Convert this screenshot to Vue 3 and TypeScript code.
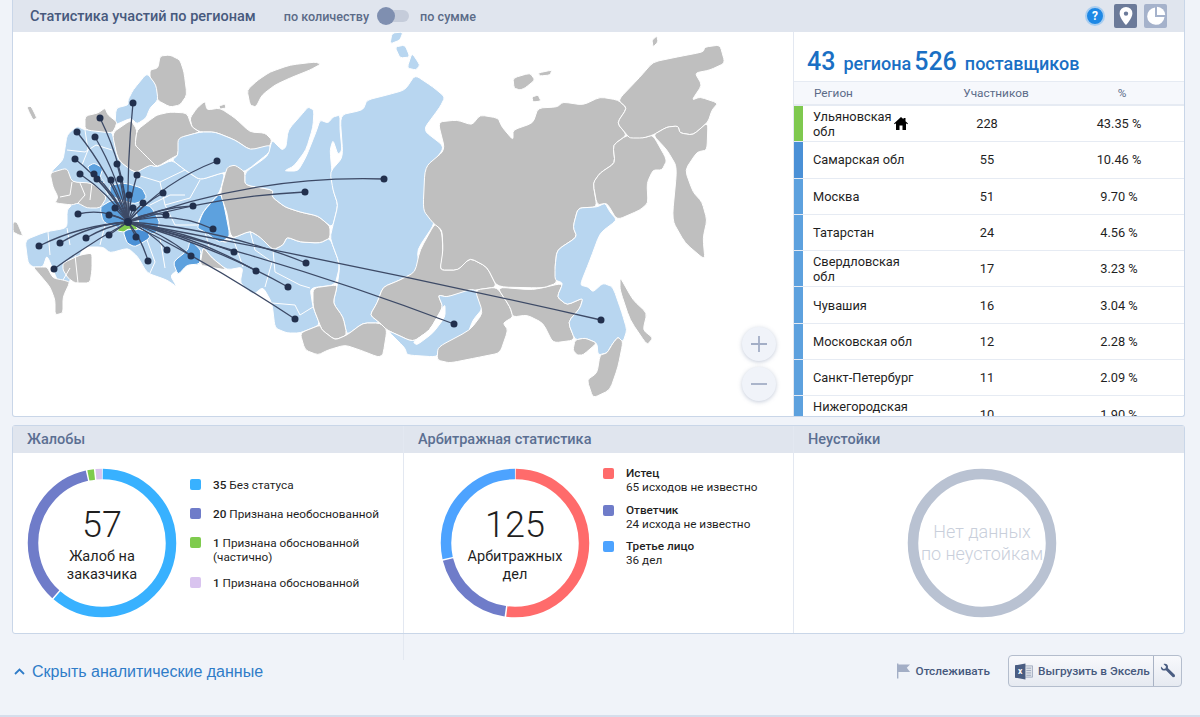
<script setup lang="ts">
interface Region { fill: string; points: string }
interface Row { name: string; count: number; pct: string; color: string; home?: boolean }
interface Slice { value: number; color: string }

const GRAY = '#bfbfbf'
const LIGHT = '#b8d6f0'
const MID = '#5da1de'
const DARK = '#4a90d6'
const GREEN = '#7fcb4e'

const regions: Region[] = [
  // запад
  { fill: GRAY, points: '13,222 17,222 23,236 19,235 13,232' },
  { fill: GRAY, points: '27,107 31,106 37,118 33,120 29,112' },
  { fill: LIGHT, points: '67,135 77,126 85,130 112,130 118,160 135,173 150,165 157,167 172,160 185,170 200,180 225,172 220,192 203,212 197,225 205,232 225,243 233,238 250,231 260,237 273,250 283,245 287,237 300,242 320,243 330,238 340,265 335,285 310,288 313,307 320,325 300,333 287,333 275,328 272,303 263,287 253,295 240,283 243,267 227,270 212,258 203,247 200,265 187,265 170,275 177,287 167,280 147,273 138,257 128,248 110,253 103,247 83,247 70,282 63,283 58,282 47,255 43,267 33,267 28,263 25,240 45,232 67,228 67,210 72,205 50,173 63,160 65,148' },
  { fill: GRAY, points: '150,70 158,68 160,56 170,55 180,60 184,72 187,95 180,105 170,107 157,100 155,85 150,78' },
  { fill: LIGHT, points: '128,100 133,90 147,73 156,85 158,100 150,108 146,118 137,124 131,118 115,125 116,108 128,105' },
  { fill: GRAY, points: '85,116 98,113 105,108 108,115 117,122 115,128 112,133 85,130' },
  { fill: GRAY, points: '112,133 131,120 137,130 135,145 140,150 150,160 157,167 150,165 135,173 118,160' },
  { fill: GRAY, points: '137,130 150,120 157,115 170,112 187,113 192,127 200,132 180,138 178,155 172,158 157,167 150,160 140,150 135,145' },
  { fill: GRAY, points: '190,118 197,108 205,101 207,110 220,108 235,118 250,132 265,133 272,140 268,150 250,150 235,140 215,132 200,132 192,127' },
  { fill: LIGHT, points: '178,138 200,132 215,132 235,140 250,150 270,145 270,152 245,172 225,172 200,180 185,170 172,160 178,155' },
  { fill: GRAY, points: '247,90 258,80 270,72 290,65 315,62 321,64 310,70 290,78 275,85 262,95 256,107 250,105' },
  { fill: GRAY, points: '219,106 225,104 226,108 220,109' },
  { fill: LIGHT, points: '392,33 403,32 400,40 390,44' },
  { fill: LIGHT, points: '395,47 405,45 410,57 400,58' },
  { fill: LIGHT, points: '412,53 420,65 416,70 407,68' },
  { fill: GRAY, points: '50,173 67,168 72,182 92,183 107,197 100,208 87,208 78,203 72,205 55,203 58,197 53,187' },
  { fill: GRAY, points: '33,267 43,267 47,267 53,278 63,280 70,282 63,297 63,313 55,315 55,300 50,287 40,275' },
  { fill: GRAY, points: '63,263 80,255 92,253 92,270 90,283 75,283 68,278 63,270' },
  { fill: GRAY, points: '203,247 212,258 227,270 215,268 200,265' },
  // центр, тёмные регионы
  { fill: MID, points: '87,167 94,163 103,168 100,177 105,183 96,182' },
  { fill: MID, points: '110,185 125,183 142,188 147,198 135,204 120,200 110,195' },
  { fill: MID, points: '100,207 112,200 125,203 130,222 118,228 103,222' },
  { fill: MID, points: '135,207 150,205 160,222 155,235 140,228' },
  { fill: DARK, points: '123,231 135,228 148,232 150,238 135,247 127,243' },
  { fill: MID, points: '173,262 188,250 190,240 201,250 200,264 187,265 178,275' },
  { fill: MID, points: '218,195 222,196 226,215 230,236 220,243 205,232 197,228 203,212' },
  { fill: GREEN, points: '117,231 122,222 135,224 138,230 128,229 124,232' },
  // Западная Сибирь
  { fill: GRAY, points: '220,193 227,167 235,165 245,172 245,185 273,190 272,197 285,207 300,212 318,216 330,226 330,238 320,243 300,242 287,237 283,245 273,250 260,237 250,231 233,238 230,233 227,213' },
  { fill: LIGHT, points: '245,172 268,156 272,140 282,150 286,147 288,130 303,113 308,107 314,110 313,127 306,150 294,166 284,171 298,171 306,157 316,132 320,120 328,123 333,117 340,115 340,130 342,150 338,155 333,140 330,150 332,172 333,190 338,205 333,225 330,226 318,216 300,212 285,207 272,197 273,190 245,185' },
  { fill: LIGHT, points: '340,115 363,110 367,100 387,95 405,90 415,75 433,87 445,97 440,107 423,130 445,147 427,170 425,200 427,210 435,223 417,250 420,270 400,280 383,287 377,303 370,315 380,323 363,323 347,335 343,317 333,303 337,287 340,265 330,238 333,225 338,205 333,190 330,172 343,157' },
  { fill: GRAY, points: '313,288 335,285 337,287 333,303 343,317 347,335 335,340 322,330 320,325 313,307' },
  { fill: GRAY, points: '300,333 320,325 322,330 335,340 347,335 363,323 380,323 387,330 383,355 378,357 360,350 345,345 328,350 318,355 305,350' },
  // Восточная Сибирь
  { fill: GRAY, points: '370,315 377,303 383,287 400,280 415,272 420,250 435,223 442,232 443,255 440,270 458,270 470,258 487,267 497,287 475,290 447,297 438,295 443,307 430,330 413,342 387,330 380,323' },
  { fill: LIGHT, points: '387,330 405,348 407,355 437,357 440,347 468,333 473,320 483,308 475,288 447,297 438,295 443,307 430,330 413,342' },
  { fill: '#ffffff', points: '413,342 430,330 443,307 445,305 445,317 433,333 417,345' },
  { fill: GRAY, points: '437,360 438,347 470,330 483,313 475,290 497,287 510,307 513,317 503,323 508,330 500,353 480,357 450,363' },
  { fill: GRAY, points: '497,287 533,290 563,283 557,297 567,305 583,298 580,308 568,322 575,340 553,343 543,323 527,315 513,317 510,307' },
  { fill: GRAY, points: '438,122 457,120 472,125 480,115 498,118 502,127 513,140 513,130 533,123 538,108 557,107 563,102 583,105 600,97 618,100 627,108 617,123 627,135 613,145 615,163 600,173 593,183 597,207 578,208 573,227 577,237 557,250 555,267 557,283 543,288 497,287 487,267 470,258 458,270 440,270 443,250 442,230 433,223 423,210 425,167 445,150' },
  // Дальний Восток
  { fill: LIGHT, points: '555,267 557,250 577,237 573,227 578,208 597,207 605,203 610,212 617,220 600,233 590,260 580,285 588,287 593,292 603,283 613,287 622,313 627,330 623,342 618,337 613,343 607,353 598,355 597,343 585,338 575,340 568,322 580,308 583,298 567,305 557,297 563,283 555,280' },
  { fill: GRAY, points: '623,342 618,367 610,390 593,398 587,380 597,373 600,355 607,353 613,343 618,337' },
  { fill: GRAY, points: '573,350 575,340 585,338 597,343 583,355 577,355' },
  { fill: GRAY, points: '627,135 643,138 653,135 667,160 662,170 653,170 647,183 648,203 640,210 617,220 607,203 597,205 593,183 600,173 615,163 613,145' },
  { fill: GRAY, points: '618,100 640,77 653,62 677,57 703,52 705,47 720,45 725,63 710,70 695,73 702,85 692,100 700,97 718,103 712,110 708,122 693,135 680,133 678,126 667,127 653,135 643,138 630,138 627,135 617,123 627,108' },
  { fill: GRAY, points: '708,122 707,150 697,152 685,170 693,192 702,202 707,220 703,238 705,260 685,243 672,220 677,167 667,150 653,135 667,127 678,126 680,133 693,135' },
  { fill: GRAY, points: '620,277 633,300 647,313 643,330 653,338 647,345 630,320 620,290' },
  { fill: GRAY, points: '513,78 530,73 535,80 525,88 520,90 514,88' },
  { fill: GRAY, points: '538,73 552,70 550,75 540,76' },
  { fill: GRAY, points: '532,97 538,95 541,101 533,102' },
  { fill: GRAY, points: '652,40 657,36 658,42 653,47' },
]

// белые границы внутри больших областей
const borders: string[] = [
  '67,150 85,152 96,145 112,150',
  '85,130 88,150 82,165',
  '72,182 70,195 60,197',
  '80,183 85,195 78,203',
  '92,183 90,200',
  '100,178 108,195',
  '137,175 160,182 185,170',
  '160,182 165,205 190,198 200,180',
  '150,205 170,195 185,195',
  '165,205 175,225 197,225',
  '67,228 70,245',
  '48,232 50,255',
  '100,245 105,225',
  '147,240 155,262 150,273',
  '160,238 165,268',
  '205,232 210,250',
  '233,238 243,267',
  '250,231 255,250 272,262 265,287',
  '273,250 275,272 300,285 310,288',
  '272,303 295,305 300,315 313,307',
  '63,280 70,268',
  '75,255 78,283',
]

// скругляет углы многоугольника, чтобы контур не был рубленым
function rounded(points: string): string {
  const p = points.split(' ').map((s) => s.split(',').map(Number))
  const n = p.length
  const at = (a: number[], b: number[], t: number) => `${a[0] + (b[0] - a[0]) * t} ${a[1] + (b[1] - a[1]) * t}`
  let d = `M${at(p[0], p[1], 0.25)}`
  for (let i = 1; i <= n; i++) {
    const cur = p[i % n]
    d += `L${at(p[i - 1], cur, 0.75)}Q${cur[0]} ${cur[1]} ${at(cur, p[(i + 1) % n], 0.25)}`
  }
  return d + 'Z'
}

const HUB = { x: 128, y: 222 }
// x, y, изгиб
const dots: [number, number, number][] = [
  [133, 103, 0.03], [100, 118, -0.1], [77, 132, -0.08], [95, 137, -0.08], [75, 159, -0.1],
  [117, 164, -0.05], [80, 174, -0.1], [94, 174, -0.1], [137, 175, 0.05], [97, 179, -0.08],
  [111, 180, -0.05], [120, 179, 0], [217, 161, 0.12], [384, 179, 0.1], [305, 192, 0.06],
  [163, 193, 0.1], [129, 195, 0], [143, 203, 0.1], [193, 206, 0.1], [115, 208, 0],
  [133, 208, 0], [78, 214, -0.2], [109, 215, -0.1], [166, 215, 0.2], [213, 229, 0.18],
  [39, 246, -0.1], [60, 243, -0.12], [86, 238, -0.08], [109, 235, 0], [136, 237, 0],
  [148, 261, 0.1], [167, 250, 0.12], [191, 256, 0.1], [234, 252, 0.05], [256, 271, 0.08],
  [306, 263, 0.08], [288, 287, 0.06], [295, 319, 0.03], [454, 324, 0.03], [54, 269, -0.03],
  [601, 320, 0.01],
]

function curve(x: number, y: number, bend: number): string {
  const dx = x - HUB.x
  const dy = y - HUB.y
  const cx = (x + HUB.x) / 2 + bend * dy
  const cy = (y + HUB.y) / 2 - bend * dx
  return `M${HUB.x} ${HUB.y}Q${cx} ${cy} ${x} ${y}`
}

const rows: Row[] = [
  { name: 'Ульяновская обл', count: 228, pct: '43.35 %', color: '#7fc94f', home: true },
  { name: 'Самарская обл', count: 55, pct: '10.46 %', color: '#4a90d6' },
  { name: 'Москва', count: 51, pct: '9.70 %', color: '#5da1de' },
  { name: 'Татарстан', count: 24, pct: '4.56 %', color: '#5da1de' },
  { name: 'Свердловская обл', count: 17, pct: '3.23 %', color: '#5da1de' },
  { name: 'Чувашия', count: 16, pct: '3.04 %', color: '#5da1de' },
  { name: 'Московская обл', count: 12, pct: '2.28 %', color: '#5da1de' },
  { name: 'Санкт-Петербург', count: 11, pct: '2.09 %', color: '#5da1de' },
  { name: 'Нижегородская обл', count: 10, pct: '1.90 %', color: '#5da1de' },
]

const complaints: Slice[] = [
  { value: 35, color: '#38b1ff' },
  { value: 20, color: '#6f7cc9' },
  { value: 1, color: '#7fcb4e' },
  { value: 1, color: '#d9c4ef' },
]
const arbitration: Slice[] = [
  { value: 65, color: '#ff6b6b' },
  { value: 24, color: '#6f7cc9' },
  { value: 36, color: '#4da3ff' },
]

const R = 69
const C = 2 * Math.PI * R

function arcs(slices: Slice[]) {
  const total = slices.reduce((s, i) => s + i.value, 0)
  let offset = 0
  return slices.map((s) => {
    const len = (s.value / total) * C
    const arc = { color: s.color, dash: `${Math.max(len - 1.5, 0)} ${C}`, offset: -(offset + 0.75) }
    offset += len
    return arc
  })
}
</script>

<template>
  <div class="page">
    <section class="panel top">
      <header class="bar">
        <h2 class="bar__title">Статистика участий по регионам</h2>
        <span class="bar__opt">по количеству</span>
        <span class="toggle"><i class="toggle__knob"></i></span>
        <span class="bar__opt">по сумме</span>
        <span class="bar__tools">
          <span class="help">?</span>
          <span class="tool tool--on">
            <svg width="14" height="18" viewBox="0 0 14 18"><path fill="#fff" fill-rule="evenodd" d="M7 0a6.4 6.4 0 0 0-6.4 6.4C.6 11 7 18 7 18s6.4-7 6.4-11.600A6.400 6.400 0 0 0 7 0zm0 4.400a2.200 2.200 0 1 1 0 4.400 2.200 2.200 0 0 1 0-4.400z" /></svg>
          </span>
          <span class="tool">
            <svg width="20" height="20" viewBox="0 0 20 20"><path fill="#fff" d="M9 1.500a8.700 8.700 0 1 0 9.500 9.500H9z" /><path fill="#fff" d="M11 .8V9h8.200A8.500 8.500 0 0 0 11 .8z" /></svg>
          </span>
        </span>
      </header>
      <div class="top__body">
        <div class="map">
          <svg class="map__svg" width="780" height="384" viewBox="13 32 780 384">
            <path v-for="(r, i) in regions" :key="i" :d="rounded(r.points)" :fill="r.fill" stroke="#fff" stroke-width="1" stroke-linejoin="round" />
            <polyline v-for="(b, i) in borders" :key="'b' + i" :points="b" fill="none" stroke="#fff" stroke-width="1" />
            <path v-for="(d, i) in dots" :key="'l' + i" :d="curve(d[0], d[1], d[2])" fill="none" stroke="#3d4a66" stroke-width="1.300" />
            <circle v-for="(d, i) in dots" :key="'d' + i" :cx="d[0]" :cy="d[1]" r="3.500" fill="#22304d" />
            <circle :cx="HUB.x" :cy="HUB.y" r="4" fill="#22304d" />
          </svg>
          <button class="zoom zoom--plus"><svg width="18" height="18" viewBox="0 0 18 18"><path d="M9 1v16M1 9h16" stroke="#a3aec6" stroke-width="1.800" /></svg></button>
          <button class="zoom zoom--minus"><svg width="18" height="18" viewBox="0 0 18 18"><path d="M1 9h16" stroke="#a3aec6" stroke-width="1.800" /></svg></button>
        </div>
        <aside class="stats">
          <div class="stats__head">
            <b>43</b><span>региона</span><b class="second">526</b><span>поставщиков</span>
          </div>
          <div class="row row--head">
            <span class="cell-name">Регион</span>
            <span class="cell-count">Участников</span>
            <span class="cell-pct">%</span>
          </div>
          <div v-for="r in rows" :key="r.name" class="row">
            <i class="row__mark" :style="{ background: r.color }"></i>
            <span class="cell-name">
              <span :class="{ 'cell-name__short': r.home }">{{ r.name }}</span>
              <svg v-if="r.home" class="home" width="14" height="13" viewBox="0 0 14 13"><path d="M7 0 0 6.500l.8.800L2 6.300V13h3.500V8.500h3V13H12V6.300l1.200 1 .8-.8L11.500 4.200V1h-2v1.300z" /></svg>
            </span>
            <span class="cell-count">{{ r.count }}</span>
            <span class="cell-pct">{{ r.pct }}</span>
          </div>
        </aside>
      </div>
    </section>

    <section class="panel bottom">
      <div class="col">
        <h3 class="col__title">Жалобы</h3>
        <div class="col__body col__body--first">
          <div class="donut">
            <svg width="150" height="150" viewBox="0 0 150 150">
              <g transform="rotate(-90 75 75)">
                <circle v-for="(a, i) in arcs(complaints)" :key="i" cx="75" cy="75" :r="R" fill="none" :stroke="a.color" stroke-width="10.500" :stroke-dasharray="a.dash" :stroke-dashoffset="a.offset" />
              </g>
            </svg>
            <div class="donut__text"><b>57</b><span>Жалоб на<br />заказчика</span></div>
          </div>
          <ul class="legend legend--first">
            <li><i style="background:#38b1ff"></i><p><b>35</b> Без статуса</p></li>
            <li><i style="background:#6f7cc9"></i><p><b>20</b> Признана необоснованной</p></li>
            <li><i style="background:#7fcb4e"></i><p><b>1</b> Признана обоснованной<br />(частично)</p></li>
            <li class="legend__last"><i style="background:#d9c4ef"></i><p><b>1</b> Признана обоснованной</p></li>
          </ul>
        </div>
      </div>
      <div class="col">
        <h3 class="col__title">Арбитражная статистика</h3>
        <div class="col__body col__body--second">
          <div class="donut">
            <svg width="150" height="150" viewBox="0 0 150 150">
              <g transform="rotate(-90 75 75)">
                <circle v-for="(a, i) in arcs(arbitration)" :key="i" cx="75" cy="75" :r="R" fill="none" :stroke="a.color" stroke-width="10.500" :stroke-dasharray="a.dash" :stroke-dashoffset="a.offset" />
              </g>
            </svg>
            <div class="donut__text"><b>125</b><span>Арбитражных<br />дел</span></div>
          </div>
          <ul class="legend legend--second">
            <li><i style="background:#ff6b6b"></i><p><b>Истец</b><br />65 исходов не известно</p></li>
            <li><i style="background:#6f7cc9"></i><p><b>Ответчик</b><br />24 исхода не известно</p></li>
            <li><i style="background:#4da3ff"></i><p><b>Третье лицо</b><br />36 дел</p></li>
          </ul>
        </div>
      </div>
      <div class="col">
        <h3 class="col__title">Неустойки</h3>
        <div class="col__body col__body--third">
          <div class="donut">
            <svg width="150" height="150" viewBox="0 0 150 150"><circle cx="75" cy="75" :r="R" fill="none" stroke="#b9c2d2" stroke-width="10.500" /></svg>
            <div class="donut__text donut__text--empty">Нет данных<br />по неустойкам</div>
          </div>
        </div>
      </div>
    </section>

    <footer class="foot">
      <i class="foot__rule"></i>
      <a class="foot__hide">
        <svg width="11" height="7" viewBox="0 0 11 7"><path d="M1 6l4.500-4.500L10 6" fill="none" stroke="#2f7cc8" stroke-width="1.800" /></svg>
        Скрыть аналитические данные
      </a>
      <span class="foot__track">
        <svg width="14" height="16" viewBox="0 0 15 16"><path fill="#a3aec6" d="M0 0h1.500v16H0zM1.500 1H14l-3.500 3.500L14 9H1.500z" /></svg>
        Отслеживать
      </span>
      <div class="export">
        <span class="export__main">
          <svg width="18" height="17" viewBox="0 0 19 17">
            <path fill="#dfe3ea" stroke="#8a97b0" stroke-width=".7" d="M10 2.500h8.500v12H10z" />
            <path stroke="#8a97b0" stroke-width=".8" d="M12 5h5M12 7.500h5M12 10h5M12 12.500h5" />
            <path fill="#4a5d82" d="M0 2l11-2v17L0 15z" />
            <text x="5.500" y="11.500" text-anchor="middle" class="export__x">x</text>
          </svg>
          <span class="export__label">Выгрузить в Эксель</span>
        </span>
        <span class="export__tool">
          <svg width="16" height="16" viewBox="0 0 16 16"><path fill="#4a5d82" d="M1 3.500 3.500 6l2-.5.500-2L3.500 1C5.500 0 8 1.200 8 3.800c0 .5 0 .9-.2 1.300l7.200 7-.3 1.800-1.800.4-7-7.100c-.4.2-.8.200-1.300.200C2 8.200.4 5.800 1 3.500z" /></svg>
        </span>
      </div>
    </footer>
  </div>
</template>

<style>
html, body { margin: 0; background: #f0f3f9; }
</style>

<style scoped>
.page {
  position: relative;
  width: 1200px;
  height: 717px;
  box-sizing: border-box;
  padding: 0 15px 0 12px;
  font-family: Roboto, "Noto Sans", sans-serif;
  border-bottom: 2px solid #d5deec;
  overflow: hidden;
}
.panel {
  border: 1px solid #c9d6e8;
  background: #fff;
  box-sizing: border-box;
}
.top { height: 417px; border-top: 0; border-radius: 0 0 3px 3px; }
.bar {
  display: flex;
  align-items: center;
  height: 32px;
  padding: 0 17px;
  background: #e0e5ee;
  color: #5b6b88;
  font-size: 12.600px;
  font-weight: 500;
}
.bar__title { margin: 0 28px 0 0; font-size: 14.500px; font-weight: 500; color: #47597d; }
.toggle {
  position: relative;
  width: 24px;
  height: 12px;
  margin: 0 11px 0 16px;
  border-radius: 6px;
  background: #c5ccda;
}
.toggle__knob {
  position: absolute;
  left: -8px;
  top: -3px;
  width: 18px;
  height: 18px;
  border-radius: 50%;
  background: #7f8fb0;
}
.bar__tools { display: flex; align-items: center; margin-left: auto; gap: 7px; }
.help {
  width: 16px;
  height: 16px;
  margin-right: 2px;
  border: 2px solid #a8cdf0;
  border-radius: 50%;
  background: #1e88e5;
  color: #fff;
  font-size: 12px;
  font-weight: 700;
  line-height: 16px;
  text-align: center;
}
.tool {
  display: flex;
  align-items: center;
  justify-content: center;
  width: 23px;
  height: 24px;
  border-radius: 2px;
  background: #a5b2cb;
}
.tool--on { background: #6b7a99; }
.top__body { display: flex; height: 384px; }
.map { position: relative; flex: none; width: 780px; height: 384px; }
.map__svg { display: block; }
.zoom {
  position: absolute;
  left: 729px;
  width: 34px;
  height: 34px;
  padding: 0;
  display: flex;
  align-items: center;
  justify-content: center;
  border: 0;
  border-radius: 50%;
  background: #f0f3f9;
  box-shadow: 0 1px 4px rgba(90, 110, 150, 0.35);
}
.zoom--plus { top: 295px; }
.zoom--minus { top: 335px; }
.stats {
  flex: 1;
  min-width: 0;
  height: 384px;
  overflow: hidden;
  border-left: 1px solid #e3e8f1;
}
.stats__head {
  display: flex;
  align-items: baseline;
  gap: 8px;
  height: 49px;
  box-sizing: border-box;
  padding: 15px 0 0 13px;
  color: #1a6fc4;
  font-size: 18px;
  font-weight: 500;
}
.stats__head b { font-size: 25px; font-weight: 500; }
.stats__head .second { margin-left: -5px; }
.row {
  position: relative;
  display: grid;
  grid-template-columns: 107px 134px 1fr;
  align-items: center;
  height: 36.300px;
  box-sizing: border-box;
  padding-left: 19px;
  border-bottom: 1px solid #e6ebf3;
  color: #1f1f1f;
  font-size: 12.800px;
  line-height: 15px;
}
.row--head {
  height: 25px;
  background: #f6f8fc;
  border-top: 1px solid #e6ebf3;
  border-bottom: 2px solid #e6ebf3;
  color: #5b6b88;
  font-size: 11.800px;
}
.row--head .cell-name { padding-left: 1px; }
.row--head .cell-count { padding-left: 18px; }
.row--head .cell-pct { padding-left: 6px; }
.row__mark { position: absolute; left: 0; top: 0; bottom: 0; width: 9px; }
.cell-name { display: flex; align-items: center; }
.cell-name__short { width: 80px; flex: none; }
.home { margin-left: 1px; flex: none; }
.cell-count { text-align: center; white-space: nowrap; }
.cell-pct { text-align: center; white-space: nowrap; }
.bottom {
  display: grid;
  grid-template-columns: 390px 390px 1fr;
  height: 209px;
  margin-top: 8px;
  border-radius: 3px;
}
.col { display: flex; flex-direction: column; border-left: 1px solid #e3e8f1; }
.col:first-child { border-left: 0; }
.col__title {
  height: 27px;
  margin: 0;
  padding-left: 14px;
  background: #e0e5ee;
  color: #5b6f92;
  font-size: 14.500px;
  font-weight: 500;
  line-height: 28px;
}
.col__body { position: relative; display: flex; flex: 1; }
.col__body--first { padding: 15px 0 0 14px; gap: 13px; }
.col__body--second { padding: 15px 0 0 36px; gap: 13px; }
.col__body--third { padding: 15px 0 0 113px; }
.donut { position: relative; width: 150px; height: 150px; flex: none; }
.donut svg { display: block; }
.donut__text {
  position: absolute;
  inset: 37px 0 0;
  color: #1f1f1f;
  font-size: 14.500px;
  line-height: 17.500px;
  text-align: center;
}
.donut__text b { display: block; margin-bottom: 3px; font-size: 36px; font-weight: 300; line-height: 40px; }
.donut__text span { display: block; }
.donut__text--empty { inset: 53px 0 0; color: #c9cfdb; font-size: 18px; font-weight: 300; line-height: 22px; }
.legend {
  margin: 0;
  padding: 0;
  list-style: none;
  display: flex;
  flex-direction: column;
  color: #1f1f1f;
  font-size: 11.750px;
  line-height: 14px;
}
.legend li { display: flex; gap: 12px; }
.legend i { flex: none; width: 11px; height: 11px; margin-top: 1px; border-radius: 2px; }
.legend p { margin: 0; }
.legend b { font-weight: 500; }
.legend--first { padding-top: 10px; gap: 15px; width: 200px; }
.legend__last { margin-top: -3px; }
.legend--second { gap: 8.500px; margin-top: -2px; }
.legend--second i { margin-top: 2px; }
.foot {
  position: relative;
  display: flex;
  align-items: center;
  height: 74px;
  padding: 0 3px 0 2px;
}
.foot__rule {
  position: absolute;
  left: 391px;
  top: 0;
  width: 1px;
  height: 26px;
  background: #e3e8f1;
}
.foot__hide {
  display: flex;
  align-items: center;
  gap: 7px;
  margin-top: 1px;
  color: #2f7cc8;
  font-family: "Liberation Sans", sans-serif;
  font-size: 16px;
}
.foot__track {
  display: flex;
  align-items: center;
  gap: 5px;
  margin: 0 18px 0 auto;
  color: #47597d;
  font-size: 11.800px;
  font-weight: 500;
}
.export {
  display: flex;
  height: 32px;
  border: 1px solid #b4bdcd;
  border-radius: 4px;
  box-sizing: border-box;
  background: linear-gradient(#f8f9fc, #e6eaf1);
  color: #47597d;
  font-size: 11.800px;
  font-weight: 500;
}
.export__main { display: flex; align-items: center; gap: 5px; width: 145px; padding-left: 6px; box-sizing: border-box; border-right: 1px solid #a9b3c5; }
.export__label { white-space: nowrap; }
.export__tool { display: flex; align-items: center; justify-content: center; width: 27px; }
.export__x { fill: #fff; font-size: 9px; font-weight: 700; font-family: Roboto, sans-serif; }
</style>
